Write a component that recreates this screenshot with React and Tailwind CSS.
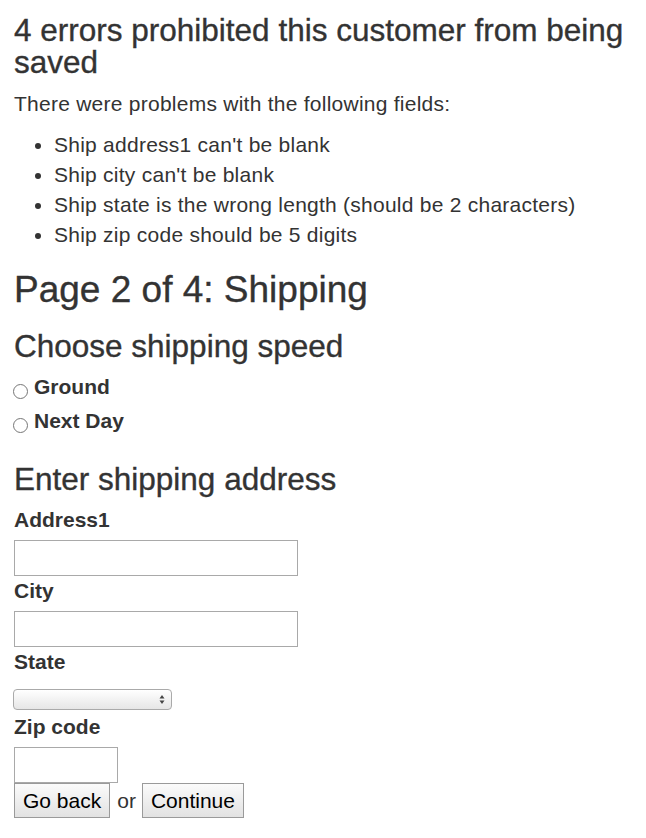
export default function App() {
  const errors = [
    "Ship address1 can't be blank",
    "Ship city can't be blank",
    "Ship state is the wrong length (should be 2 characters)",
    "Ship zip code should be 5 digits",
  ];

  const heading = "[-webkit-text-stroke:0.35px_#333]";
  const field = "block h-[36px] border border-[#a9a9a9] bg-white";
  const label = "block text-[21px] leading-[30px] font-bold";
  const btn = "h-[35px] px-[8px] border border-[#9a9a9a] bg-gradient-to-b from-[#fbfbfb] to-[#e2e2e2] text-black";

  return (
    <div className="min-h-[838px] bg-white px-[14px] pt-[14px] text-[#333] font-['Liberation_Sans',Arial,sans-serif]">
      {/* error summary */}
      <div>
        <h2 className={`${heading} text-[31.5px] leading-[32px]`}>4 errors prohibited this customer from being saved</h2>
        <p className="mt-[11px] text-[21px] leading-[30px] tracking-[0.25px]">There were problems with the following fields:</p>
        <ul className="mt-[11px] list-disc pl-[40px] text-[21px] leading-[30px] tracking-[0.25px]">
          {errors.map(e => <li key={e}>{e}</li>)}
        </ul>
      </div>

      <h1 className={`${heading} mt-[20px] text-[37px] leading-[40px]`}>Page 2 of 4: Shipping</h1>

      <h2 className={`${heading} mt-[18px] text-[31.5px] leading-[36px]`}>Choose shipping speed</h2>
      <div className="mt-[8px] flex flex-col gap-[4px]">
        {["Ground", "Next Day"].map(s => (
          <label key={s} className="flex items-center gap-[6px] text-[21px] leading-[30px] font-bold -ml-[1px]">
            <input type="radio" name="speed" className="m-0 w-[15px] h-[15px] mt-[8px] accent-gray-500" />
            {s}
          </label>
        ))}
      </div>

      <h2 className={`${heading} mt-[25px] text-[31.5px] leading-[36px]`}>Enter shipping address</h2>

      <label className={`${label} mt-[8px]`}>Address1</label>
      <input className={`${field} mt-[5px] w-[284px]`} />
      <label className={label}>City</label>
      <input className={`${field} mt-[5px] w-[284px]`} />
      <label className={label}>State</label>
      <div className="relative mt-[12px] -ml-[1px] w-[159px]">
        <select className="block w-full h-[21px] appearance-none rounded-[4px] border border-[#aaa] bg-gradient-to-b from-white to-[#e6e6e6] text-[12px]">
          <option></option>
        </select>
        <svg className="pointer-events-none absolute right-[7px] top-[5px]" width="6" height="11" viewBox="0 0 6 11">
          <path d="M3 1 L5.5 4.5 H0.5 Z" fill="#444" />
          <path d="M3 10 L5.5 6.5 H0.5 Z" fill="#444" />
        </svg>
      </div>
      <label className={`${label} mt-[2px]`}>Zip code</label>
      <input className={`${field} mt-[5px] w-[104px]`} />
      <div className="flex items-center text-[21px]">
        <button className={btn}>Go back</button>
        <span className="ml-[7px]">or</span>
        <button className={`${btn} ml-[6px]`}>Continue</button>
      </div>
    </div>
  );
}
